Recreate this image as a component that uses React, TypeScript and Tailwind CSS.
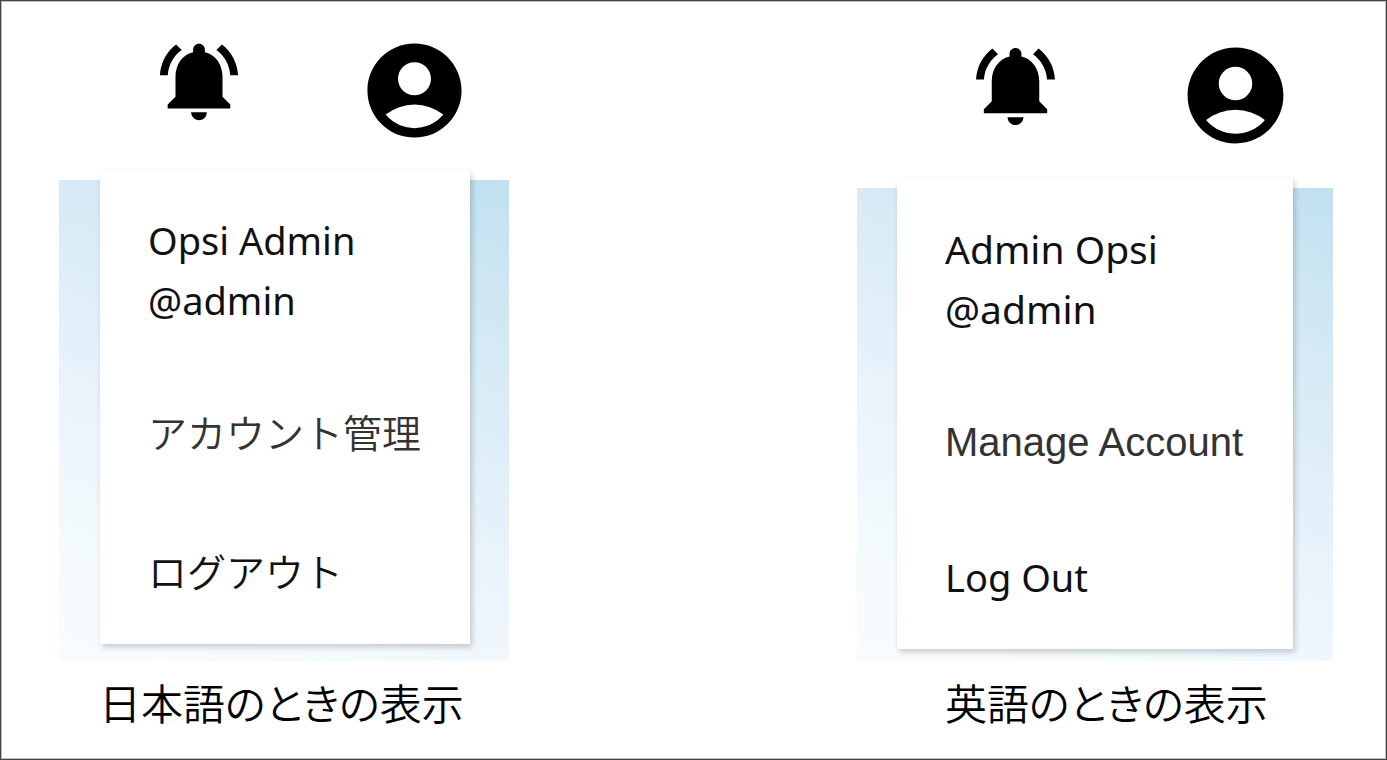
import { clsx } from "clsx";

interface MenuPreviewProps {
  name: string;
  username: string;
  manageLabel: string;
  logoutLabel: string;
  caption: string;
  lang: "ja" | "en";
}

function BellIcon({ className }: { className?: string }) {
  return (
    <svg viewBox="0 0 24 24" fill="currentColor" className={className} aria-hidden="true">
      <path d="M7.58 4.08L6.15 2.65C3.75 4.48 2.17 7.3 2.03 10.5h2c.15-2.65 1.51-4.97 3.55-6.42zm12.39 6.42h2c-.15-3.2-1.73-6.02-4.12-7.85l-1.42 1.43c2.02 1.45 3.39 3.77 3.54 6.42zM18 11c0-3.07-1.64-5.64-4.5-6.32V4c0-.83-.67-1.5-1.5-1.5s-1.5.67-1.5 1.5v.68C7.63 5.36 6 7.92 6 11v5l-2 2v1h16v-1l-2-2v-5zm-6 11c.14 0 .27-.01.4-.04.65-.14 1.18-.58 1.44-1.18.1-.24.15-.5.15-.78h-4c.01 1.1.9 2 2.01 2z" />
    </svg>
  );
}

function AccountIcon({ className }: { className?: string }) {
  return (
    <svg viewBox="0 0 24 24" fill="currentColor" className={className} aria-hidden="true">
      <path d="M12 2C6.48 2 2 6.48 2 12s4.48 10 10 10 10-4.48 10-10S17.52 2 12 2zm0 4c1.93 0 3.5 1.57 3.5 3.5S13.93 13 12 13s-3.5-1.57-3.5-3.5S10.07 6 12 6zm0 14c-2.03 0-4.43-.82-6.14-2.88a9.947 9.947 0 0 1 12.28 0C16.43 19.18 14.03 20 12 20z" />
    </svg>
  );
}

function MenuPreview({ name, username, manageLabel, logoutLabel, caption, lang }: MenuPreviewProps) {
  const ja = lang === "ja";

  return (
    <section className={clsx("min-w-0", ja ? "flex-[450]" : "flex-[476]")}>
      <header
        className={clsx(
          "flex items-start justify-end",
          ja ? "h-[179px] gap-[112px] pt-[33px] pr-[38px]" : "h-[187px] gap-[115px] pt-[37px] pr-10"
        )}
      >
        <button type="button" aria-label="Notifications">
          <BellIcon className={ja ? "size-[94px]" : "size-[95px]"} />
        </button>
        <button type="button" aria-label="Account">
          <AccountIcon className={ja ? "size-[113px]" : "size-[115px]"} />
        </button>
      </header>

      <div
        className={clsx(
          "flex bg-[linear-gradient(202deg,#c0e1f0,#d6eaf5_28%,#ebf4fc_62%,#f3fafd_80%,#f9fcfe)]",
          ja ? "pr-[39px] pb-[17px] pl-[41px]" : "pr-10 pb-3 pl-10"
        )}
      >
        <div
          className={clsx(
            "flex flex-1 flex-col items-start bg-white pb-[42px] pl-12 leading-[60px] whitespace-nowrap text-[#111] shadow-[2px_3px_6px_rgba(0,0,0,0.2)]",
            ja ? "-mt-[9px] pt-[39px] text-[38px]" : "-mt-[10px] pt-[41px] text-[39px]"
          )}
        >
          <p>{name}</p>
          <p>{username}</p>
          <a
            href="#account"
            className={clsx(
              "mt-[73px] text-[#333]",
              ja ? "text-[39px] font-[350]" : "font-['Liberation_Sans',sans-serif] text-[40px]"
            )}
          >
            {manageLabel}
          </a>
          <button
            type="button"
            className={clsx(ja ? "mt-[79px] text-[39px] font-[350]" : "mt-[75px] text-[38px]")}
          >
            {logoutLabel}
          </button>
        </div>
      </div>

      <p
        lang="ja"
        className={clsx(
          "pt-[13px] text-[42px] leading-[60px] font-[350] whitespace-nowrap text-black [font-feature-settings:'palt']",
          ja ? "pl-10" : "pl-[88px]"
        )}
      >
        {caption}
      </p>
    </section>
  );
}

export default function App() {
  return (
    <main className="flex min-h-screen gap-[348px] border border-[#444] bg-white pr-[53px] pl-[58px] font-['Noto_Sans','Noto_Sans_CJK_JP',sans-serif] shadow-[inset_0_0_0_1px_#bfbdbe]">
      <MenuPreview
        lang="ja"
        name="Opsi Admin"
        username="@admin"
        manageLabel="アカウント管理"
        logoutLabel="ログアウト"
        caption="日本語のときの表示"
      />
      <MenuPreview
        lang="en"
        name="Admin Opsi"
        username="@admin"
        manageLabel="Manage Account"
        logoutLabel="Log Out"
        caption="英語のときの表示"
      />
    </main>
  );
}
